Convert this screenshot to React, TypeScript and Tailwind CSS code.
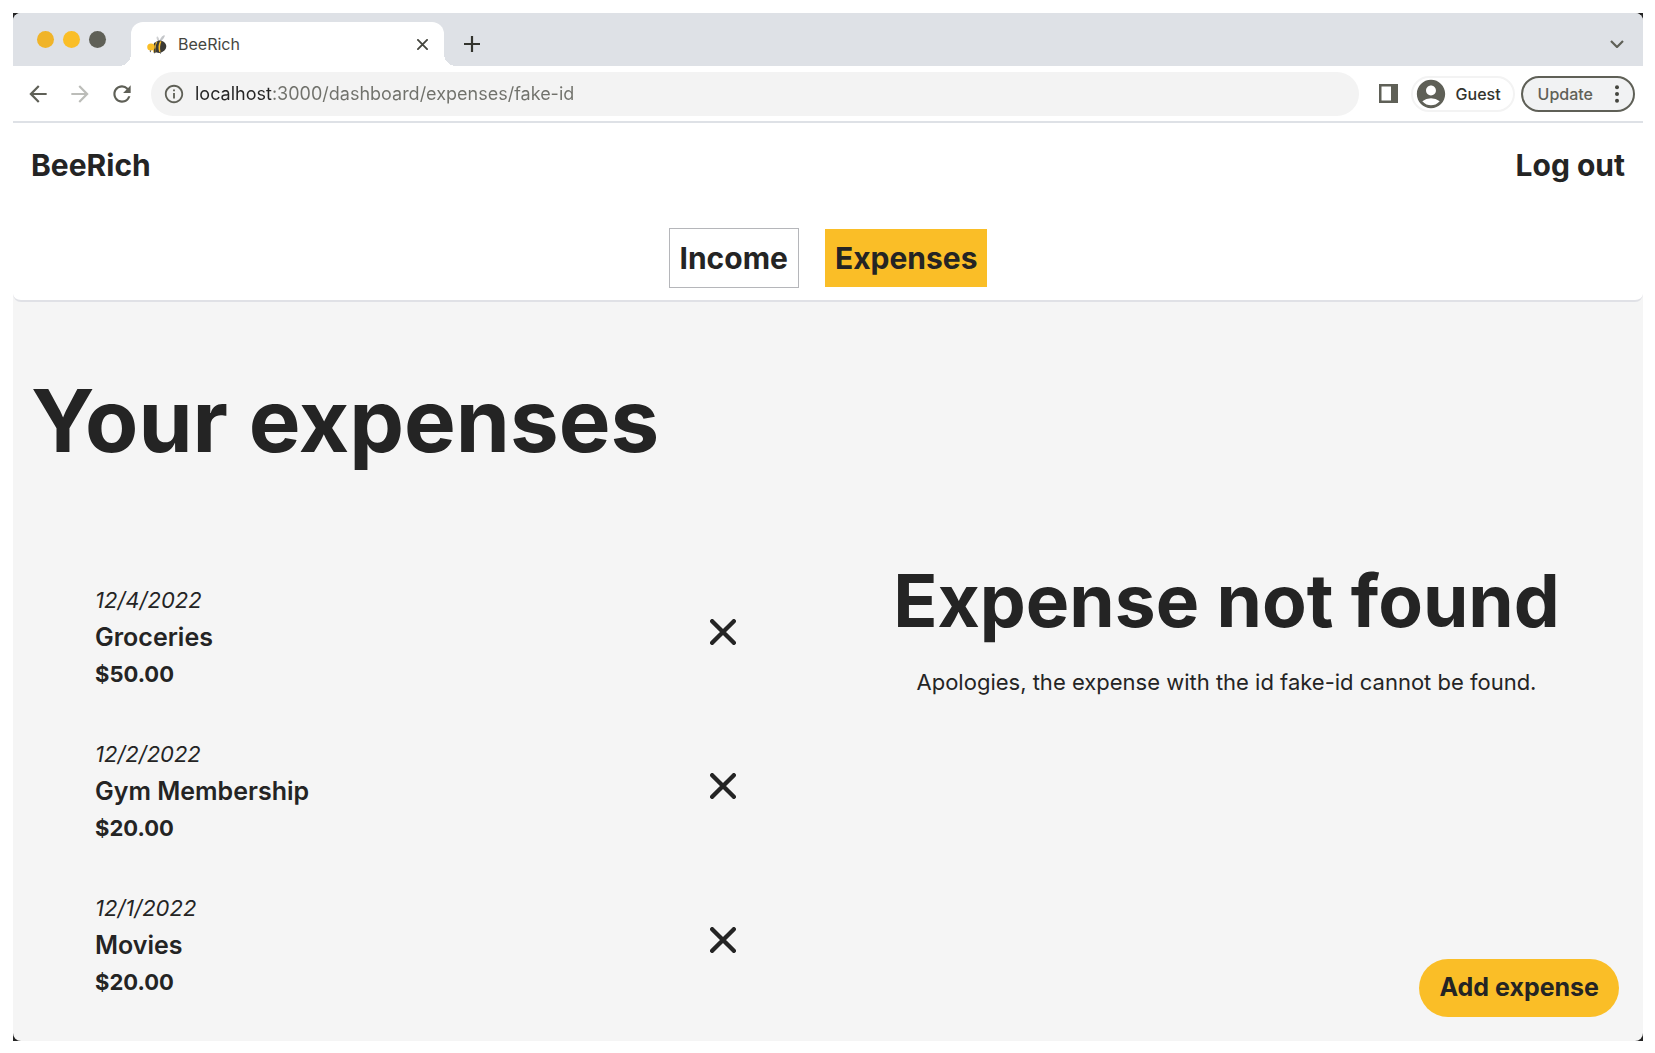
import React from "react";
import {
  MdAccountCircle,
  MdArrowBack,
  MdArrowForward,
  MdInfoOutline,
  MdRefresh,
} from "react-icons/md";

type Expense = { id: string; date: string; title: string; amount: string };

const expenses: Expense[] = [
  { id: "1", date: "12/4/2022", title: "Groceries", amount: "$50.00" },
  { id: "2", date: "12/2/2022", title: "Gym Membership", amount: "$20.00" },
  { id: "3", date: "12/1/2022", title: "Movies", amount: "$20.00" },
];

function Cross({ className, width }: { className: string; width: number }) {
  return (
    <svg viewBox="0 0 24 24" fill="none" stroke="currentColor" strokeWidth={width} strokeLinecap="round" className={className} aria-hidden="true">
      <path d="M2 2 22 22M22 2 2 22" />
    </svg>
  );
}

function Bee() {
  return (
    <svg viewBox="0 0 20 20" className="size-5" aria-hidden="true">
      <path d="M11.500 8C9.500 5.500 9 3 10 2.500S12.500 5 12.500 8Z" fill="#cfd0d2" />
      <path d="M12 8C13 5 15.500 1 17.300 1.300S16 5.500 13 8.500Z" fill="#c4c6c9" />
      <path d="M9 8C11 5.500 16 6 18 9c1.300 1.800 1.600 3 1 5-.8 2.500-4 4.800-7 5l-4.500-1Z" fill="#3b3a35" />
      <path d="M8.500 8.500 6 18l2.500.3C8 15 8.500 11 10.500 7.500ZM13 7.200c-1.700 3-2 7-.8 10.800l1.300-.3c-.8-3.500-.5-7.200 1-10.200Z" fill="#fabe27" />
      <path d="M7 9c-.8 3-.8 6 .3 9.500l1.500.2C7.500 15 8 11 9 8Z" fill="#3b3a35" />
      <ellipse cx="4" cy="13" rx="3.800" ry="3.600" fill="#fabe27" />
      <path d="M3.500 16.300c-.5.600-.3 1.300.5 1.800M7.500 17.500c-.5.800-.3 1.300.5 1.800M13 18.500l.5 1" fill="none" stroke="#3b3a35" strokeWidth="1" />
    </svg>
  );
}

function TabStrip() {
  return (
    <div className="flex h-[53px] items-stretch bg-[#dee1e6]">
      <div className="flex w-[118px] items-center gap-[9px] pl-6">
        <span className="size-[17px] rounded-full bg-[#f0b429]" />
        <span className="size-[17px] rounded-full bg-[#fabe27]" />
        <span className="size-[17px] rounded-full bg-[#5f6057]" />
      </div>
      <div className="relative mt-[9px] flex w-[313px] items-center rounded-t-xl bg-white pr-3 pl-4">
        <span className="absolute bottom-0 -left-3 size-3 bg-[radial-gradient(circle_at_top_left,transparent_12px,white_12px)]" />
        <span className="absolute -right-3 bottom-0 size-3 bg-[radial-gradient(circle_at_top_right,transparent_12px,white_12px)]" />
        <Bee />
        <span className="ml-[11px] flex-1 text-base text-[#45463f]">BeeRich</span>
        <button type="button" aria-label="Close tab" className="p-1 text-[#45463f]">
          <Cross className="size-[11px]" width={4} />
        </button>
      </div>
      <button type="button" aria-label="New tab" className="mt-[9px] ml-5 text-[#33342e]">
        <svg viewBox="0 0 16 16" className="size-4" fill="none" stroke="currentColor" strokeWidth="2.2">
          <path d="M8 0v16M0 8h16" />
        </svg>
      </button>
      <button type="button" aria-label="Search tabs" className="mt-[9px] mr-[19px] ml-auto text-[#5f6057]">
        <svg viewBox="0 0 14 8" className="h-2 w-[14px]" fill="none" stroke="currentColor" strokeWidth="2.2">
          <path d="M1 1l6 6 6-6" />
        </svg>
      </button>
    </div>
  );
}

function Toolbar() {
  return (
    <div className="flex h-[57px] items-center border-b-2 border-[#dee1e6] bg-white pr-2 pl-3 text-[#5f6057]">
      <button type="button" aria-label="Back">
        <MdArrowBack className="size-[26px]" />
      </button>
      <button type="button" aria-label="Forward" className="ml-4 text-[#bcbdb9]">
        <MdArrowForward className="size-[26px]" />
      </button>
      <button type="button" aria-label="Reload" className="ml-4">
        <MdRefresh className="size-[26px]" />
      </button>
      <div className="ml-4 flex h-11 flex-1 items-center rounded-full bg-[#f3f3f3] pl-3">
        <MdInfoOutline className="size-[22px]" />
        <input
          type="text"
          aria-label="Address"
          defaultValue="localhost:3000/dashboard/expenses/fake-id"
          className="ml-2 w-full flex-1 bg-[linear-gradient(to_right,#242424_79px,#70716b_79px)] bg-clip-text pl-0.5 text-lg text-transparent outline-none"
        />
      </div>
      <button type="button" aria-label="Side panel" className="ml-5">
        <svg viewBox="0 0 19 19" className="size-[19px]">
          <path fill="currentColor" fillRule="evenodd" d="M0 0h19v19H0zM2.500 2.500v14H12v-14z" />
        </svg>
      </button>
      <button type="button" className="ml-[13px] flex h-9 items-center rounded-full border-2 border-[#f3f3f3] pr-3 pl-px text-base font-medium text-[#33342e]">
        <MdAccountCircle className="size-[34px] text-[#5f6057]" />
        <span className="ml-2">Guest</span>
      </button>
      <button type="button" className="ml-1.5 flex h-9 items-center rounded-full border-2 border-[#5f6057] bg-[#f1f2f3] pr-[14px] pl-[15px] text-base font-medium">
        Update
        <svg viewBox="0 0 4 18" className="ml-[22px] h-[18px] w-1" fill="#45463f">
          <circle cx="2" cy="2.200" r="2" />
          <circle cx="2" cy="9" r="2" />
          <circle cx="2" cy="15.800" r="2" />
        </svg>
      </button>
    </div>
  );
}

function Header() {
  return (
    <header className="rounded-b-lg border-b-2 border-[#e0e1e6] bg-white px-[18px] pt-5 pb-3 text-3xl font-bold">
      <div className="flex h-11 items-center justify-between">
        <a href="#home">BeeRich</a>
        <button type="button">Log out</button>
      </div>
      <nav className="mt-[41px] flex items-center justify-center gap-[26px]">
        <a href="#income" className="flex h-[60px] items-center border border-[#b5b6ba] px-2.5">
          Income
        </a>
        <a href="#expenses" className="flex h-[58px] items-center bg-[#fabe27] px-2.5">
          Expenses
        </a>
      </nav>
    </header>
  );
}

function ExpenseItem({ expense }: { expense: Expense }) {
  return (
    <li className="flex items-center justify-between">
      <a href={"#expense-" + expense.id} className="flex flex-col">
        <span className="text-[22px] leading-[37px] italic">{expense.date}</span>
        <span className="text-[25px] leading-[37px] font-semibold">{expense.title}</span>
        <span className="text-[22px] leading-9 font-bold">{expense.amount}</span>
      </a>
      <button type="button" aria-label={"Delete " + expense.title} className="mb-[11px] px-7 py-5">
        <Cross className="size-[26px]" width={4} />
      </button>
    </li>
  );
}

export default function App() {
  return (
    <div className="flex min-h-screen flex-col bg-white p-3 pt-[13px] pl-[13px] font-[Inter,sans-serif] text-[#242424]">
      <div className="flex flex-1 flex-col bg-[#242424]">
        <div className="relative flex flex-1 flex-col overflow-hidden rounded-lg bg-[#f5f5f5]">
          <TabStrip />
          <Toolbar />
          <Header />
          <main className="px-[18px] pt-[73px]">
            <h1 className="text-[87px] leading-[92px] font-bold">Your expenses</h1>
            <div className="mt-[89px] grid grid-cols-2">
              <ul className="flex flex-col gap-11 px-16 pt-[26px]">
                {expenses.map((expense) => (
                  <ExpenseItem key={expense.id} expense={expense} />
                ))}
              </ul>
              <section className="text-center">
                <h2 className="mt-1.5 text-[73px] leading-[77px] font-bold whitespace-nowrap">Expense not found</h2>
                <p className="mt-[27px] text-[22px] leading-8">Apologies, the expense with the id fake-id cannot be found.</p>
              </section>
            </div>
          </main>
          <button type="button" className="absolute right-6 bottom-6 h-[58px] rounded-full bg-[#fabe27] px-5 text-[25px] font-bold">
            Add expense
          </button>
        </div>
      </div>
    </div>
  );
}
